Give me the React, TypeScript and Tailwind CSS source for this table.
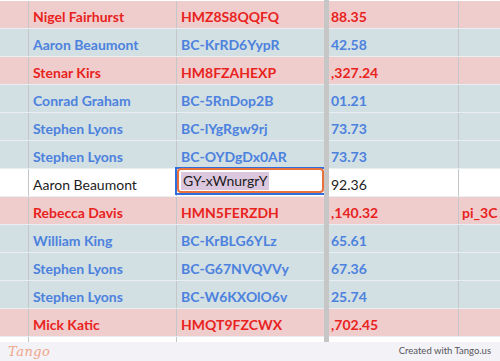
type Tone = "red" | "blue" | "white";

type Row = {
  tone: Tone;
  name: string;
  code: string;
  amount: string;
  extra?: string;
  editing?: boolean;
};

const rows: Row[] = [
  { tone: "red", name: "Nigel Fairhurst", code: "HMZ8S8QQFQ", amount: "88.35" },
  { tone: "blue", name: "Aaron Beaumont", code: "BC-KrRD6YypR", amount: "42.58" },
  { tone: "red", name: "Stenar Kirs", code: "HM8FZAHEXP", amount: ",327.24" },
  { tone: "blue", name: "Conrad Graham", code: "BC-5RnDop2B", amount: "01.21" },
  { tone: "blue", name: "Stephen Lyons", code: "BC-lYgRgw9rj", amount: "73.73" },
  { tone: "blue", name: "Stephen Lyons", code: "BC-OYDgDx0AR", amount: "73.73" },
  { tone: "white", name: "Aaron Beaumont", code: "GY-xWnurgrY", amount: "92.36", editing: true },
  { tone: "red", name: "Rebecca Davis", code: "HMN5FERZDH", amount: ",140.32", extra: "pi_3C" },
  { tone: "blue", name: "William King", code: "BC-KrBLG6YLz", amount: "65.61" },
  { tone: "blue", name: "Stephen Lyons", code: "BC-G67NVQVVy", amount: "67.36" },
  { tone: "blue", name: "Stephen Lyons", code: "BC-W6KXOlO6v", amount: "25.74" },
  { tone: "red", name: "Mick Katic", code: "HMQT9FZCWX", amount: ",702.45" },
];

const rowBg: Record<Tone, string> = {
  red: "bg-[#f0cdcd] text-[#e8231e] font-bold",
  blue: "bg-[#d2dfe3] text-[#4c82de] font-bold",
  white: "bg-white text-[#1c1c1c] font-normal",
};

function GridRow({ row }: { row: Row }) {
  return (
    <div className={`flex h-[28px] border-b border-[#e9eef0] text-[14px] leading-none ${rowBg[row.tone]}`}>
      <div className="w-[29px] shrink-0 border-r border-[#c3c7c9]" />
      <div className="flex w-[148px] shrink-0 items-center border-r border-[#c3c7c9] pl-[4px] pt-[5px]">
        {row.name}
      </div>
      <div className="relative flex w-[152px] shrink-0 items-center pl-[4px] pt-[5px]">
        {row.editing ? (
          <>
            <div className="absolute -top-[2px] bottom-[1px] left-[-2px] right-[3px] border-2 border-[#2f6fdc]" />
            <div className="absolute -top-[1px] bottom-[3px] left-0 right-[5px] flex items-center rounded-[4px] border-2 border-[#e8703c] bg-white pl-[2px]">
              <span className="bg-[#dcc8de] px-[2px] py-[2px] text-[14px] text-[#1c1c1c]">
                GY-xWnurgrY
              </span>
            </div>
          </>
        ) : (
          row.code
        )}
      </div>
      <div className="flex w-[130px] shrink-0 items-center whitespace-nowrap border-r border-[#c3c7c9] pl-[2px] pt-[5px]">
        {row.amount}
      </div>
      <div className="flex flex-1 items-center whitespace-nowrap pl-[3px] pt-[5px]">
        {row.extra}
      </div>
    </div>
  );
}

export default function App() {
  return (
    <div
      className="relative h-[361px] w-[500px] overflow-hidden bg-white"
      style={{ fontFamily: "Lato, 'Noto Sans', sans-serif" }}
    >
      {/* GRID */}
      <div className="border-t border-white">
        {rows.map((row, i) => (
          <GridRow key={i} row={row} />
        ))}
        <div className="flex h-[6px]">
          <div className="w-[29px] border-r border-[#c3c7c9]" />
          <div className="w-[148px] border-r border-[#c3c7c9]" />
        </div>
      </div>

      {/* overlay scrollbar */}
      <div className="absolute left-[324px] top-0 h-[342px] w-[5px] bg-[#c6c6c6]" />

      {/* FOOTER */}
      <div className="absolute bottom-0 left-0 right-0 flex h-[19px] items-center justify-between bg-[#f3f2f7] pl-[8px] pr-[9px]">
        <span
          className="text-[13px] italic tracking-[0.5px] text-[#f0a48a]"
          style={{ fontFamily: "'DejaVu Serif', serif" }}
        >
          Tango
        </span>
        <span className="text-[9.5px] text-[#55545a]">Created with Tango.us</span>
      </div>
    </div>
  );
}
